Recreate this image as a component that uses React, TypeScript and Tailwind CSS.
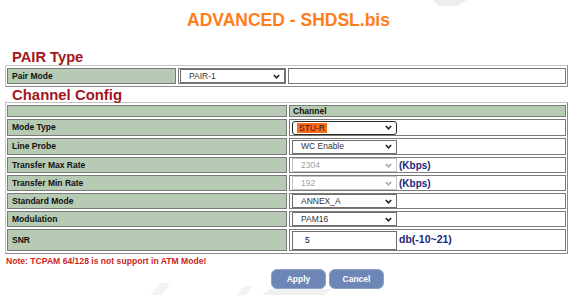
import React from "react";

const Chevron = ({ color }: { color: string }) => (
  <svg width="7" height="5" viewBox="0 0 7 5">
    <path d="M0.8 1 L3.5 3.8 L6.2 1" fill="none" stroke={color} strokeWidth="1.6" />
  </svg>
);

function Sel({
  text,
  disabled = false,
  focus = false,
  hl = false,
}: {
  text: string;
  disabled?: boolean;
  focus?: boolean;
  hl?: boolean;
}) {
  const border = focus
    ? "rounded-[3px] border-[1.5px] border-[#2a2a2a]"
    : disabled
    ? "border border-[#c4c4c4]"
    : "border border-[#6e6e6e]";
  return (
    <div
      className={`flex h-[14px] w-[105px] items-center justify-between bg-white pr-[4px] ${border} ${
        hl ? "pl-[4px]" : "pl-[8px]"
      }`}
    >
      {hl ? (
        <span className="bg-[#ff6a1a] px-[2px] leading-[10px] text-[#222]">{text}</span>
      ) : (
        <span className={disabled ? "text-[#a2a2a2]" : "text-[#333]"}>{text}</span>
      )}
      <Chevron color={disabled ? "#a8a8a8" : "#222"} />
    </div>
  );
}

const Label = ({ children, h }: { children?: React.ReactNode; h: string }) => (
  <div
    className={`flex w-[280px] items-center border border-[#7a7a7a] bg-[#b6cab4] pl-[4px] font-bold text-[#111] ${h}`}
  >
    {children}
  </div>
);

const Val = ({ children, h }: { children?: React.ReactNode; h: string }) => (
  <div className={`flex w-[277px] items-center gap-[2px] border border-[#7a7a7a] bg-white pl-[2px] ${h}`}>
    {children}
  </div>
);

const Unit = ({ children, size }: { children: React.ReactNode; size: string }) => (
  <span className={`font-bold text-[#1c1f7c] ${size}`}>{children}</span>
);

export default function App() {
  return (
    <div className="relative h-[295px] w-[577px] overflow-hidden bg-white font-['Liberation_Sans',Arial,sans-serif] text-[8.5px]">
      <svg className="pointer-events-none absolute left-0 top-0" width="577" height="295">
        <polygon points="433,0 467,0 457,6 438,6" fill="#ededed" />
        <polygon points="150,295 160,283 170,283 162,295" fill="#f3f3f3" />
        <polygon points="262,295 270,289 332,289 324,295" fill="#f1f1f1" />
        <polygon points="236,295 244,286 252,286 246,295" fill="#f3f3f3" />
      </svg>

      <div className="relative">
        <div className="flex h-[40px] items-center justify-center text-[17.5px] font-bold text-[#ff7d1a]">
          ADVANCED - SHDSL.bis
        </div>

        <div className="flex h-[25px] items-center pl-[12px] pt-[9px] text-[14.7px] font-bold leading-none text-[#a3161c]">
          PAIR Type
        </div>

        <div className="ml-[5px] w-[563px] border border-b-[#8a8a8a] border-l-[#c4c4c4] border-r-[#8a8a8a] border-t-[#c4c4c4] px-[1px] py-[2px]">
          <div className="flex h-[16px] gap-[2px]">
            <div className="flex w-[169px] items-center border border-[#7a7a7a] bg-[#b6cab4] pl-[4px] font-bold text-[#111]">
              Pair Mode
            </div>
            <div className="flex w-[108px] items-center border border-[#7a7a7a] bg-white pl-[1px]">
              <Sel text="PAIR-1" />
            </div>
            <div className="w-[278px] border border-[#7a7a7a] bg-white" />
          </div>
        </div>

        <div className="flex h-[15px] items-center pl-[12px] pt-[1px] text-[14.9px] font-bold leading-none text-[#a3161c]">
          Channel Config
        </div>

        <div className="ml-[5px] flex w-[563px] flex-col gap-[2px] border border-b-[#8a8a8a] border-l-[#c4c4c4] border-r-[#8a8a8a] border-t-[#c4c4c4] px-[1px] py-[2px]">
          <div className="flex gap-[2px]">
            <Label h="h-[12px]" />
            <div className="flex h-[12px] w-[277px] items-center border border-[#7a7a7a] bg-[#b6cab4] pl-[3px] font-bold text-[#111]">
              Channel
            </div>
          </div>
          <div className="flex gap-[2px]">
            <Label h="h-[17px]">Mode Type</Label>
            <Val h="h-[17px]">
              <Sel text="STU-R" focus hl />
            </Val>
          </div>
          <div className="flex gap-[2px]">
            <Label h="h-[17px]">Line Probe</Label>
            <Val h="h-[17px]">
              <Sel text="WC Enable" />
            </Val>
          </div>
          <div className="flex gap-[2px]">
            <Label h="h-[16px]">Transfer Max Rate</Label>
            <Val h="h-[16px]">
              <Sel text="2304" disabled />
              <Unit size="text-[10px]">(Kbps)</Unit>
            </Val>
          </div>
          <div className="flex gap-[2px]">
            <Label h="h-[16px]">Transfer Min Rate</Label>
            <Val h="h-[16px]">
              <Sel text="192" disabled />
              <Unit size="text-[10px]">(Kbps)</Unit>
            </Val>
          </div>
          <div className="flex gap-[2px]">
            <Label h="h-[16px]">Standard Mode</Label>
            <Val h="h-[16px]">
              <Sel text="ANNEX_A" />
            </Val>
          </div>
          <div className="flex gap-[2px]">
            <Label h="h-[16px]">Modulation</Label>
            <Val h="h-[16px]">
              <Sel text="PAM16" />
            </Val>
          </div>
          <div className="flex gap-[2px]">
            <Label h="h-[22px]">SNR</Label>
            <Val h="h-[22px]">
              <div className="flex h-[19px] w-[105px] items-center border border-[#6e6e6e] bg-white pl-[12px] text-[#111]">
                5
              </div>
              <Unit size="text-[10.5px]">db(-10~21)</Unit>
            </Val>
          </div>
        </div>

        <div className="flex h-[14px] items-center pl-[6px] text-[8.6px] font-bold text-[#cc1f22]">
          Note: TCPAM 64/128 is not support in ATM Mode!
        </div>

        <div className="flex gap-[3px] pl-[271px] pt-[1px]">
          <div className="flex h-[20px] w-[55px] items-center justify-center rounded-[6px] border border-[#8fa3c8] bg-[#6d86b6] font-bold text-white">
            Apply
          </div>
          <div className="flex h-[20px] w-[55px] items-center justify-center rounded-[6px] border border-[#8fa3c8] bg-[#6d86b6] font-bold text-white">
            Cancel
          </div>
        </div>
      </div>
    </div>
  );
}
